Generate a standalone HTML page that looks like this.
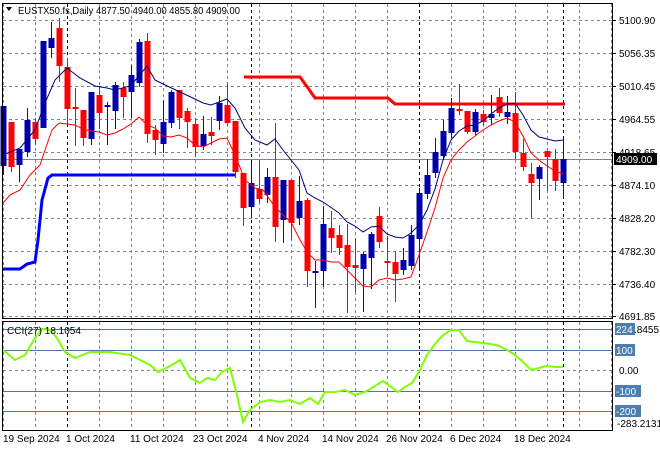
<!DOCTYPE html>
<html><head><meta charset="utf-8"><style>
body{margin:0;background:#fff;width:660px;height:450px;overflow:hidden}
svg{display:block;font-family:"Liberation Sans",sans-serif;font-size:10px}
</style></head><body>
<svg id="s" width="660" height="450" xmlns="http://www.w3.org/2000/svg">
<rect width="660" height="450" fill="#fff"/>
<g id="grid"></g>
<polyline fill="none" stroke="#ff0000" stroke-width="3" points="244,77 300,77 308,88 315,98 388,98 395,104 565,104"/>
<polyline fill="none" stroke="#0000ff" stroke-width="3" points="3,269 20,269 27,264 35,262 38,240 42,200 48,178 52,175 235,175"/>
<g id="c"></g>
<polyline fill="none" stroke="#000080" stroke-width="1" points="3,155 20,148 35,130 45,103 55,80 67,68 80,78 95,86 107,88 115,90 130,86 139,76 147,66 155,80 163,84 180,92 195,99 203,103 211,105 219,102 227,99 235,108 245,128 255,140 267,145 275,139 283,150 291,160 299,170 307,193 315,198 323,202 339,213 347,222 355,226 363,232 371,227 379,226 387,234 395,237 403,238 411,233 419,225 427,210 435,189 443,160 451,140 459,131 467,126 475,125 483,121 491,114 499,108 507,104 515,103 523,115 531,130 539,137 547,139 555,141 563,140"/>
<polyline fill="none" stroke="#ff0000" stroke-width="1" points="3,203 10,195 20,190 30,175 40,165 45,150 52,130 59,123 67,124 75,125 83,129 91,131 99,132 107,135 115,133 123,129 131,124 139,117 147,125 155,128 163,136 171,137 179,135 187,138 195,145 203,147 211,143 219,139 227,138 235,155 245,180 255,188 263,190 275,207 283,215 291,222 299,238 307,252 315,260 323,260 331,262 339,262 347,270 355,278 363,286 371,287 379,280 387,278 395,280 403,279 411,277 419,255 427,232 435,208 443,178 451,160 459,150 467,142 475,136 483,130 491,125 499,121 507,118 515,122 523,136 531,153 539,160 547,166 555,171 563,174"/>
<polyline fill="none" stroke="#7fff00" stroke-width="2" points="3,350 15,360 25,355 35,338 42,329 50,330 57,338 65,352 75,358 90,352 110,352 130,355 150,365 158,372 170,366 180,360 190,378 200,383 207,378 215,380 222,372 230,368 237,395 243,422 250,410 260,402 270,400 280,402 290,400 300,404 310,398 318,404 325,392 335,392 345,390 355,395 365,392 375,386 383,381 390,386 398,392 405,387 412,383 420,370 427,355 435,344 443,335 451,330 459,330 467,341 475,342 483,343 491,344 499,346 507,350 515,355 523,362 531,370 539,368 547,366 555,367 563,367"/>
<g id="frame" fill="none" stroke="#000">
<rect x="2.5" y="3.5" width="610" height="315"/>
<rect x="2.5" y="321.5" width="610" height="109"/>
</g>
<path d="M6,7 L12,7 L9,11 Z" fill="#000"/>
<text x="18" y="14" fill="#000" textLength="222" lengthAdjust="spacingAndGlyphs">EUSTX50.fs,Daily  4877.50 4940.00 4855.80 4909.00</text>
<g id="lab" fill="#000"></g>
</svg>
<script>
var NS="http://www.w3.org/2000/svg",S=document.getElementById('s');
function el(p,t,a,txt){var e=document.createElementNS(NS,t);for(var k in a)e.setAttribute(k,a[k]);if(txt!=null)e.textContent=txt;document.getElementById(p).appendChild(e);return e;}
var hy=[20,53,86,119,152,185,218,251,284,316];
hy.forEach(function(y){el('grid','line',{x1:3,x2:612,y1:y+.5,y2:y+.5,stroke:'#7a8590','stroke-dasharray':'3,3'});});
for(var x=3.5;x<612;x+=32){el('grid','line',{x1:x,x2:x,y1:4,y2:430,stroke:'#7a8590','stroke-dasharray':'3,3'});}
[67.5,251.5,419.5,563.5].forEach(function(x){el('grid','line',{x1:x,x2:x,y1:4,y2:430,stroke:'#000','stroke-dasharray':'3,3'});});
el('grid','line',{x1:3,x2:612,y1:159.5,y2:159.5,stroke:'#7a8590'});
[329,350,391,411].forEach(function(y){el('grid','line',{x1:3,x2:612,y1:y+.5,y2:y+.5,stroke:'#4a78a8'});});
el('grid','line',{x1:3,x2:612,y1:370.5,y2:370.5,stroke:'#7a8590','stroke-dasharray':'3,3'});
var C=[['b',106,166,106,175],['r',122,167,122,172],['b',149,165,149,182],['b',120,152,108,157],['r',122,139,118,145],['b',41,128,41,128],['b',38,48,22,58],['r',28,66,18,82],['r',67,109,58,125],['r',107,108,88,146],['r',110,138,110,146],['b',92,139,92,145],['r',95,113,86,129],['b',105,107,102,145],['b',85,111,82,129],['r',88,97,82,118],['b',75,92,65,118],['b',42,83,39,87],['r',41,134,33,143],['r',130,140,125,155],['b',122,144,100,153],['b',92,123,90,128],['r',90,118,90,129],['r',111,122,108,148],['r',124,147,118,157],['b',134,146,116,150],['r',132,136,117,145],['b',103,121,96,130],['r',105,123,83,125],['r',121,172,121,178],['r',173,208,173,226],['b',183,207,163,218],['r',189,199,160,203],['b',177,195,168,203],['r',177,227,123,242],['b',180,220,180,243],['r',180,223,180,240],['b',201,218,176,225],['r',200,271,198,287],['b',271,272,261,308],['b',224,271,206,287],['r',228,238,211,253],['r',235,248,225,255],['r',245,267,224,313],['r',265,268,238,292],['b',254,269,252,312],['b',234,258,232,289],['r',216,242,207,248],['r',261,263,236,276],['r',262,274,251,302],['b',260,270,248,275],['b',235,266,225,270],['b',193,239,188,271],['b',175,194,159,199],['b',152,173,138,178],['b',131,156,120,160],['b',108,133,98,138],['r',109,110,84,115],['r',111,132,111,134],['b',112,132,109,135],['r',114,122,110,125],['b',114,118,95,125],['r',97,113,88,117],['b',112,117,96,124],['r',113,152,92,159],['r',153,167,139,171],['r',174,183,163,218],['b',167,179,165,200],['r',151,157,151,191],['r',159,181,149,191],['b',159,183,137,198]];
C.forEach(function(c,i){var x=3+8*i,col=c[0]=='b'?'#0000aa':'#ff0000';
el('c','line',{x1:x+.5,x2:x+.5,y1:c[3],y2:c[4],stroke:c[0]=='b'?'#0000ff':'#ff0000'});
var h=Math.max(2,c[2]-c[1]);el('c','rect',{x:x-2.5,y:c[1],width:6,height:h,fill:col});});
var pl=[[20,'5100.90'],[53,'5056.35'],[86,'5010.45'],[119,'4964.55'],[152,'4918.65'],[185,'4874.10'],[218,'4828.20'],[251,'4782.30'],[284,'4736.40'],[316,'4691.85']];
pl.forEach(function(p){el('lab','line',{x1:612,x2:616,y1:p[0]+.5,y2:p[0]+.5,stroke:'#000'});el('lab','text',{x:619,y:p[0]+4},p[1]);});
el('lab','rect',{x:614,y:153,width:43,height:12,fill:'#000'});
el('lab','text',{x:616,y:163,fill:'#fff'},'4909.00');
[[329,'224'],[350,'100'],[391,'-100'],[411,'-200']].forEach(function(p){var w=p[1].length*6+2;el('lab','rect',{x:615,y:p[0]-6,width:w,height:12,fill:'#4a7fb0'});el('lab','text',{x:616,y:p[0]+4,fill:'#fff'},p[1]);});
el('lab','text',{x:634,y:333},'.8455');
el('lab','text',{x:619,y:374},'0.00');
el('lab','text',{x:617,y:427},'-283.2131');
el('lab','text',{x:7,y:334},'CCI(27) 18.1054');
[[3,'19 Sep 2024'],[66,'1 Oct 2024'],[130,'11 Oct 2024'],[193,'23 Oct 2024'],[258,'4 Nov 2024'],[322,'14 Nov 2024'],[386,'26 Nov 2024'],[450,'6 Dec 2024'],[514,'18 Dec 2024']].forEach(function(d){el('lab','text',{x:d[0],y:442},d[1]);});
</script>
</body></html>
